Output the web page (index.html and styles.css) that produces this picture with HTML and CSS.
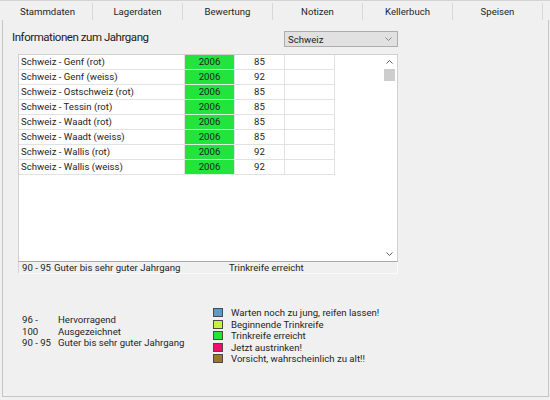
FILE: index.html
```html
<!DOCTYPE html>
<html lang="de">
<head>
<meta charset="utf-8">
<title>Jahrgang</title>
<link rel="stylesheet" href="styles.css">
</head>
<body>
<div class="app">
  <div class="tabs">
    <div class="tab">Stammdaten</div>
    <div class="tab">Lagerdaten</div>
    <div class="tab">Bewertung</div>
    <div class="tab">Notizen</div>
    <div class="tab">Kellerbuch</div>
    <div class="tab">Speisen</div>
  </div>
  <div class="panel">
    <div class="header">
      <div class="title">Informationen zum Jahrgang</div>
      <div class="select">
        <span>Schweiz</span>
        <svg class="chev" width="7" height="4" viewBox="0 0 7 4"><path d="M0.5 0.5 L3.5 3.5 L6.5 0.5" fill="none" stroke="#8a8a8a" stroke-width="1"/></svg>
      </div>
    </div>
    <div class="list">
      <div class="grid-area">
        <table class="grid">
          <tr><td class="name">Schweiz - Genf (rot)</td><td class="year">2006</td><td class="score">85</td><td class="empty"></td></tr>
          <tr><td class="name">Schweiz - Genf (weiss)</td><td class="year">2006</td><td class="score">92</td><td class="empty"></td></tr>
          <tr><td class="name">Schweiz - Ostschweiz (rot)</td><td class="year">2006</td><td class="score">85</td><td class="empty"></td></tr>
          <tr><td class="name">Schweiz - Tessin (rot)</td><td class="year">2006</td><td class="score">85</td><td class="empty"></td></tr>
          <tr><td class="name">Schweiz - Waadt (rot)</td><td class="year">2006</td><td class="score">85</td><td class="empty"></td></tr>
          <tr><td class="name">Schweiz - Waadt (weiss)</td><td class="year">2006</td><td class="score">85</td><td class="empty"></td></tr>
          <tr><td class="name">Schweiz - Wallis (rot)</td><td class="year">2006</td><td class="score">92</td><td class="empty"></td></tr>
          <tr><td class="name">Schweiz - Wallis (weiss)</td><td class="year">2006</td><td class="score">92</td><td class="empty"></td></tr>
        </table>
      </div>
      <div class="scrollbar">
        <svg class="arrow" width="7" height="4" viewBox="0 0 7 4"><path d="M0.5 3.5 L3.5 0.5 L6.5 3.5" fill="none" stroke="#606060" stroke-width="1"/></svg>
        <div class="thumb"></div>
        <div class="track"></div>
        <svg class="arrow" width="7" height="4" viewBox="0 0 7 4"><path d="M0.5 0.5 L3.5 3.5 L6.5 0.5" fill="none" stroke="#606060" stroke-width="1"/></svg>
      </div>
    </div>
    <div class="status">
      <span class="st-range">90 - 95</span>
      <span class="st-text">Guter bis sehr guter Jahrgang</span>
      <span class="st-state">Trinkreife erreicht</span>
    </div>
    <div class="legends">
      <div class="scale">
        <span>96 -</span><span>Hervorragend</span>
        <span>100</span><span>Ausgezeichnet</span>
        <span>90 - 95</span><span>Guter bis sehr guter Jahrgang</span>
      </div>
      <div class="colors">
        <div class="crow"><span class="sw sw-blue"></span>Warten noch zu jung, reifen lassen!</div>
        <div class="crow"><span class="sw sw-yellow"></span>Beginnende Trinkreife</div>
        <div class="crow"><span class="sw sw-green"></span>Trinkreife erreicht</div>
        <div class="crow"><span class="sw sw-pink"></span>Jetzt austrinken!</div>
        <div class="crow"><span class="sw sw-brown"></span>Vorsicht, wahrscheinlich zu alt!!</div>
      </div>
    </div>
  </div>
</div>
</body>
</html>
```
FILE: styles.css
```css
html, body {
  margin: 0;
  padding: 0;
  background: #f0f0f0;
}
body {
  font-family: Roboto, "Noto Sans", sans-serif;
  font-size: 9.6px;
  color: #1e1e1e;
}
.app {
  width: 550px;
  height: 400px;
  display: flex;
  flex-direction: column;
  box-sizing: border-box;
  border-top: 1px solid #d4d4d4;
}
.tabs {
  display: flex;
  height: 19px;
  padding-left: 3px;
  flex: none;
}
.tab {
  width: 89px;
  margin-top: 2px;
  height: 17px;
  line-height: 17px;
  text-align: center;
  border-right: 1px solid #d9d9d9;
}
.panel {
  flex: 1;
  margin: 0 1px 3px 2px;
  border: 1px solid #c6c6c6;
  border-top: none;
  padding-left: 9px;
  display: flex;
  flex-direction: column;
}
.header {
  margin-top: 10px;
  width: 386px;
  height: 18px;
  display: flex;
  justify-content: space-between;
  align-items: flex-start;
}
.title {
  font-size: 11.5px;
  letter-spacing: -0.45px;
  line-height: 15px;
  color: #1a1a1a;
}
.select {
  margin-top: 1px;
  width: 114px;
  height: 16px;
  box-sizing: border-box;
  border: 1px solid #adadad;
  background: #e1e1e1;
  display: flex;
  align-items: center;
  justify-content: space-between;
  padding: 0 5px 0 3px;
}
.list {
  margin: 6px 0 0 6px;
  width: 380px;
  height: 208px;
  box-sizing: border-box;
  border: 1px solid #d0d0d0;
  border-bottom-color: #a8a8a8;
  background: #fff;
  display: flex;
}
.grid-area {
  flex: 1;
}
.grid {
  border-collapse: collapse;
  table-layout: fixed;
}
.grid td {
  height: 14px;
  padding: 0;
  border-bottom: 1px solid #e2e2e2;
  border-right: 1px solid #e2e2e2;
  line-height: 14px;
  white-space: nowrap;
  overflow: hidden;
}
.grid td.name {
  width: 163px;
  padding-left: 2px;
}
.grid td.year {
  width: 49px;
  text-align: center;
  background: #21e43c;
  border-bottom-color: #d7f5da;
}
.grid td.score {
  width: 49px;
  text-align: center;
}
.grid td.empty {
  width: 49px;
}
.scrollbar {
  width: 13px;
  display: flex;
  flex-direction: column;
  align-items: center;
  padding: 5px 0;
  margin-right: 1px;
}
.scrollbar .arrow {
  flex: none;
}
.thumb {
  margin-top: 5px;
  width: 11px;
  height: 12px;
  background: #cdcdcd;
}
.track {
  flex: 1;
}
.status {
  margin-left: 6px;
  width: 380px;
  height: 12px;
  box-sizing: border-box;
  border-left: 1px solid #d6d6d6;
  border-right: 1px solid #fafafa;
  border-bottom: 1px solid #fafafa;
  display: flex;
  align-items: center;
  line-height: 11px;
  padding-left: 3px;
}
.st-range {
  width: 32px;
  flex: none;
}
.st-text {
  width: 175px;
  flex: none;
}
.legends {
  display: flex;
  align-items: flex-start;
  margin-top: 33px;
}
.scale {
  margin-top: 7px;
  margin-left: 10px;
  width: 191px;
  display: grid;
  grid-template-columns: 36px auto;
  line-height: 11.5px;
}
.colors {
  display: flex;
  flex-direction: column;
  line-height: 11.5px;
}
.crow {
  display: flex;
  align-items: center;
}
.sw {
  width: 10px;
  height: 9px;
  box-sizing: border-box;
  border: 1px solid #4a4a4a;
  margin-right: 8px;
}
.sw-blue { background: #5a9cc8; }
.sw-yellow { background: #c8f03c; }
.sw-green { background: #22e43a; }
.sw-pink { background: #e8146c; }
.sw-brown { background: #9a7828; }
```
